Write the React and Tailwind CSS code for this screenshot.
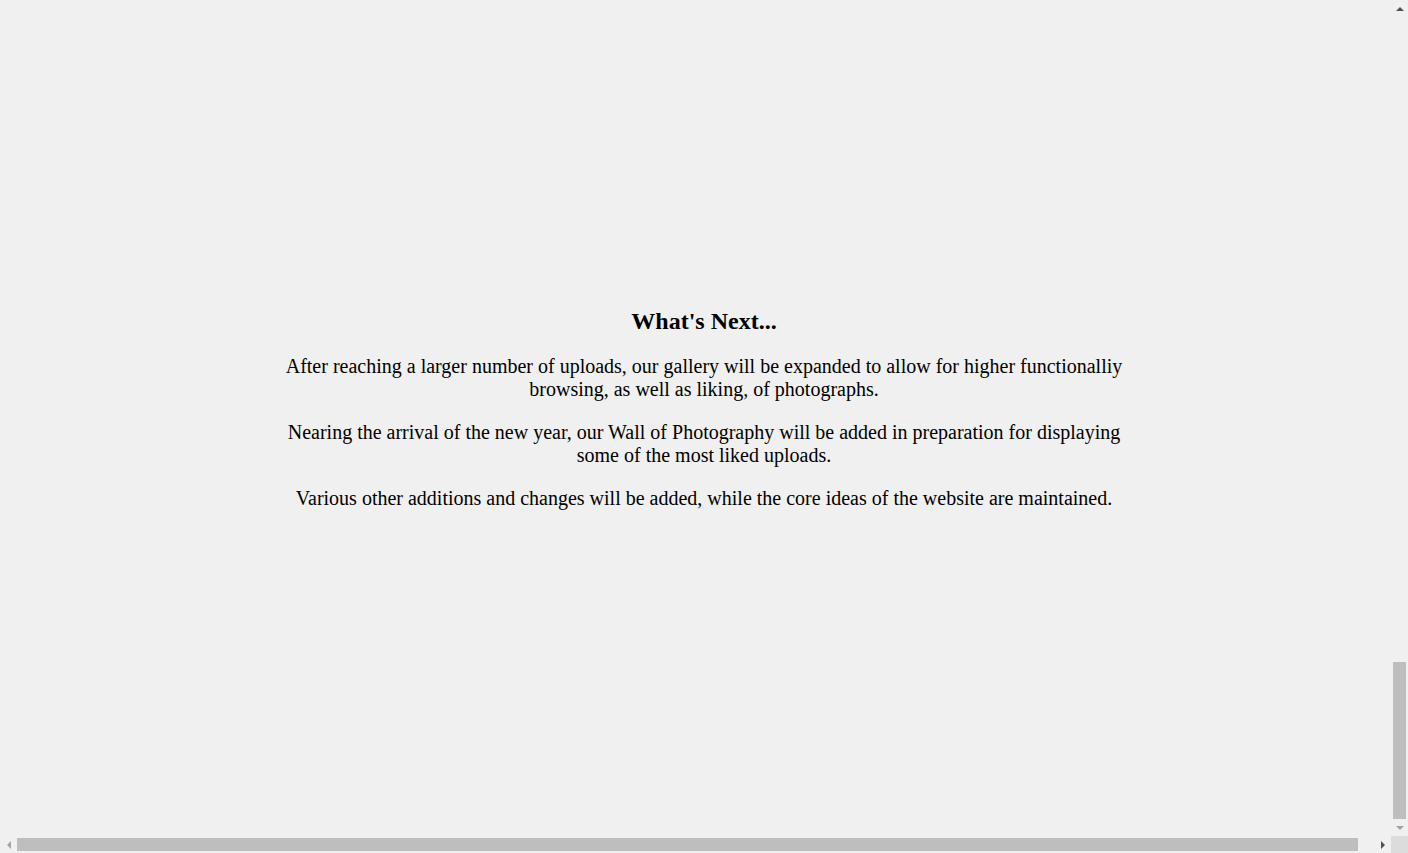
export default function App() {
  return (
    <div className="relative h-[853px] w-full overflow-hidden bg-[#f0f0f0] text-black" style={{ fontFamily: '"Liberation Serif", "Times New Roman", serif' }}>
      <section className="mx-auto w-[850px] pt-[307px] text-center">
        <h2 className="mb-[20px] text-[24px] font-bold leading-[28px]">What's Next...</h2>
        <p className="mb-[20px] text-[20px] leading-[23px]">
          After reaching a larger number of uploads, our gallery will be expanded to allow for higher functionalliy browsing, as well as liking, of photographs.
        </p>
        <p className="mb-[20px] text-[20px] leading-[23px]">
          Nearing the arrival of the new year, our Wall of Photography will be added in preparation for displaying some of the most liked uploads.
        </p>
        <p className="text-[20px] leading-[23px]">
          Various other additions and changes will be added, while the core ideas of the website are maintained.
        </p>
      </section>

      {/* vertical scrollbar */}
      <div className="absolute right-0 top-0 flex h-[836px] w-[17px] flex-col items-center bg-[#f0f0f0]">
        <div className="flex h-[17px] w-full items-center justify-center">
          <div className="h-0 w-0 border-x-[4px] border-b-[4px] border-x-transparent border-b-[#505050]" />
        </div>
        <div className="flex-1" />
        <div className="h-[157px] w-[13px] bg-[#bebebe]" />
        <div className="flex h-[17px] w-full items-center justify-center">
          <div className="h-0 w-0 border-x-[4px] border-t-[4px] border-x-transparent border-t-[#a3a3a3]" />
        </div>
      </div>

      {/* horizontal scrollbar */}
      <div className="absolute bottom-0 left-0 flex h-[17px] w-[1391px] items-center bg-[#f0f0f0]">
        <div className="flex h-full w-[17px] items-center justify-center">
          <div className="h-0 w-0 border-y-[4px] border-r-[4px] border-y-transparent border-r-[#a3a3a3]" />
        </div>
        <div className="h-[13px] w-[1341px] bg-[#bebebe]" />
        <div className="flex-1" />
        <div className="flex h-full w-[17px] items-center justify-center">
          <div className="h-0 w-0 border-y-[4px] border-l-[4px] border-y-transparent border-l-[#505050]" />
        </div>
      </div>
      <div className="absolute bottom-0 right-0 h-[17px] w-[17px] bg-[#dcdcdc]" />
    </div>
  );
}
